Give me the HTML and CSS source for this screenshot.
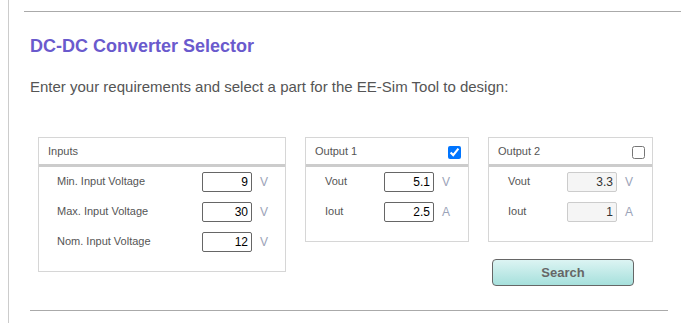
FILE: index.html
```html
<!DOCTYPE html>
<html lang="en">

<head>
    <meta charset="UTF-8">
    <meta name="viewport" content="width=device-width, initial-scale=1.0">
    <title>DC-DC Converter Selector</title>
    <link rel="stylesheet" href="styles.css">
</head>

<body>
    <div class="page">
        <div class="rule-top"></div>
        <div class="content">
            <h1 class="title">DC-DC Converter Selector</h1>
            <p class="intro">Enter your requirements and select a part for the EE-Sim Tool to design:</p>

            <div class="panels">
                <div class="panel panel-inputs">
                    <div class="panel-head">Inputs</div>
                    <div class="panel-body">
                        <label class="field-label">Min. Input Voltage</label>
                        <input class="field" type="text" value="9">
                        <span class="unit">V</span>

                        <label class="field-label">Max. Input Voltage</label>
                        <input class="field" type="text" value="30">
                        <span class="unit">V</span>

                        <label class="field-label">Nom. Input Voltage</label>
                        <input class="field" type="text" value="12">
                        <span class="unit">V</span>
                    </div>
                </div>

                <div class="panel panel-out">
                    <div class="panel-head">
                        <span>Output 1</span>
                        <input class="check" type="checkbox" checked>
                    </div>
                    <div class="panel-body">
                        <label class="field-label">Vout</label>
                        <input class="field" type="text" value="5.1">
                        <span class="unit">V</span>

                        <label class="field-label">Iout</label>
                        <input class="field" type="text" value="2.5">
                        <span class="unit">A</span>
                    </div>
                </div>

                <div class="panel panel-out panel-out2">
                    <div class="panel-head">
                        <span>Output 2</span>
                        <input class="check" type="checkbox">
                    </div>
                    <div class="panel-body">
                        <label class="field-label">Vout</label>
                        <input class="field" type="text" value="3.3" disabled>
                        <span class="unit">V</span>

                        <label class="field-label">Iout</label>
                        <input class="field" type="text" value="1" disabled>
                        <span class="unit">A</span>
                    </div>
                </div>

                <button class="search" type="button">Search</button>
            </div>

            <div class="rule-bottom"></div>
        </div>
    </div>
</body>

</html>
```

FILE: styles.css
```css
* {
    margin: 0;
    padding: 0;
    box-sizing: border-box;
}

html,
body {
    height: 100%;
    overflow: hidden;
}

body {
    font-family: "Liberation Sans", Arial, sans-serif;
    color: #555;
    background-color: #fff;
}

.page {
    margin-left: 8px;
    height: 100%;
    border-left: 1px solid #ccc;
    padding-top: 11px;
}

.rule-top {
    margin-left: 15px;
    border-top: 1px solid #aaa;
}

.content {
    padding-left: 21px;
    width: 660px;
}

.title {
    margin-top: 24px;
    font-size: 18px;
    line-height: 20px;
    font-weight: bold;
    color: #6a5acd;
}

.intro {
    margin-top: 22px;
    font-size: 15px;
    line-height: 17px;
    color: #555;
}

/* three boxes, search button under the last one */
.panels {
    margin-top: 42px;
    margin-left: 8px;
    display: grid;
    grid-template-columns: 248px 164px 165px;
    column-gap: 19px;
    align-items: start;
}

.panel {
    border: 1px solid #d6d6d6;
    font-size: 11px;
}

.panel-inputs {
    grid-row: span 2;
    height: 135px;
}

.panel-out {
    height: 105px;
}

.panel-head {
    height: 29px;
    padding: 0 7px 0 9px;
    display: flex;
    align-items: center;
    justify-content: space-between;
    line-height: 13px;
    color: #555;
    border-bottom: 3px solid #ccc;
}

.check {
    width: 13px;
    height: 13px;
    margin: 3px 0 0 0;
}

.panel-body {
    padding: 5px 0 0 18px;
    display: grid;
    grid-template-columns: 145px 50px auto;
    row-gap: 10px;
    align-items: start;
}

.panel-out .panel-body {
    padding-left: 19px;
    grid-template-columns: 59px 50px auto;
}

.field-label {
    padding-top: 3px;
    line-height: 13px;
    color: #555;
}

.field {
    width: 50px;
    height: 20px;
    padding: 0 3px;
    border: 1px solid #666;
    border-radius: 2px;
    font-family: "Liberation Sans", Arial, sans-serif;
    font-size: 12px;
    color: #000;
    text-align: right;
    background-color: #fff;
}

.field:disabled {
    border-color: #ccc;
    background-color: #f5f5f5;
    color: #333;
}

.unit {
    padding: 4px 0 0 8px;
    line-height: 13px;
    font-size: 12px;
    color: #9ba3b8;
}

.search {
    grid-column: 3;
    margin: 17px 0 0 4px;
    width: 142px;
    height: 27px;
    border: 1px solid #666;
    border-radius: 4px;
    background: linear-gradient(#dcf4f3, #a6e0dc);
    font-family: "Liberation Sans", Arial, sans-serif;
    font-size: 13px;
    font-weight: bold;
    color: #666;
}

.rule-bottom {
    margin-top: 24px;
    width: 638px;
    border-top: 1px solid #aaa;
}
```
